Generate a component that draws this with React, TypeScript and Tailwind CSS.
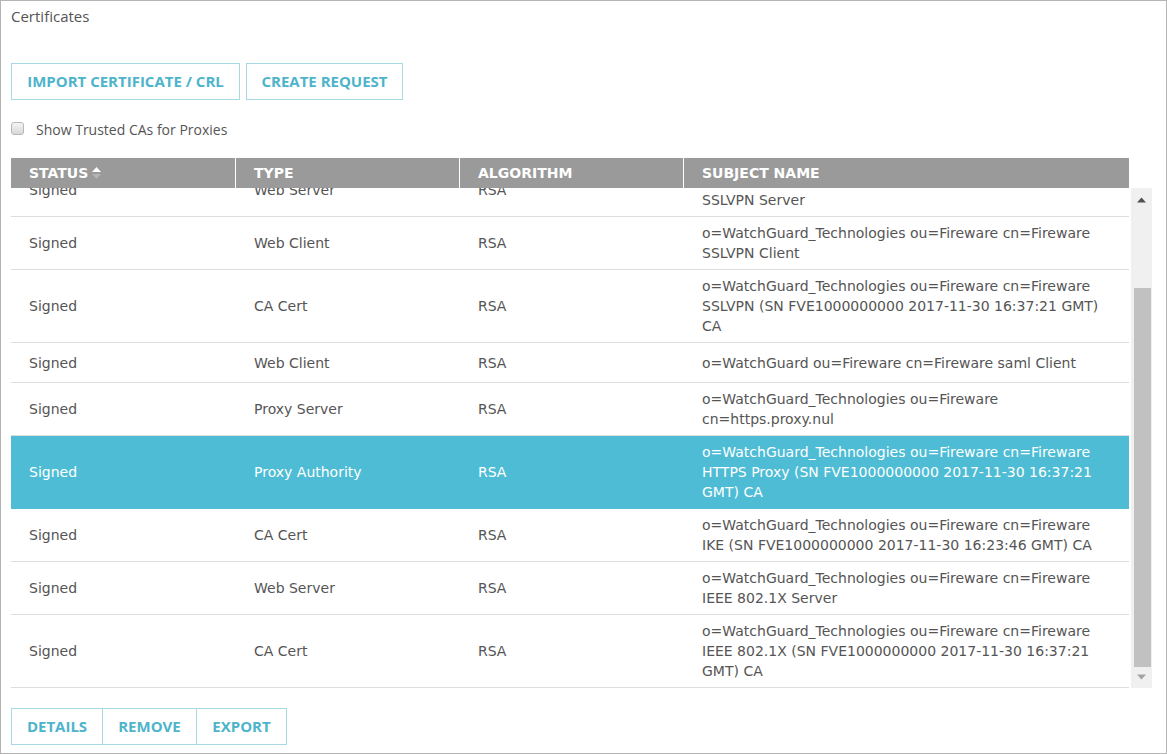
import React from "react";

type Row = { status: string; type: string; alg: string; subject: string[]; selected?: boolean };

const rows: Row[] = [
  { status: "Signed", type: "Web Server", alg: "RSA", subject: ["o=WatchGuard_Technologies ou=Fireware cn=Fireware", "SSLVPN Server"] },
  { status: "Signed", type: "Web Client", alg: "RSA", subject: ["o=WatchGuard_Technologies ou=Fireware cn=Fireware", "SSLVPN Client"] },
  { status: "Signed", type: "CA Cert", alg: "RSA", subject: ["o=WatchGuard_Technologies ou=Fireware cn=Fireware", "SSLVPN (SN FVE1000000000 2017-11-30 16:37:21 GMT)", "CA"] },
  { status: "Signed", type: "Web Client", alg: "RSA", subject: ["o=WatchGuard ou=Fireware cn=Fireware saml Client"] },
  { status: "Signed", type: "Proxy Server", alg: "RSA", subject: ["o=WatchGuard_Technologies ou=Fireware", "cn=https.proxy.nul"] },
  { status: "Signed", type: "Proxy Authority", alg: "RSA", subject: ["o=WatchGuard_Technologies ou=Fireware cn=Fireware", "HTTPS Proxy (SN FVE1000000000 2017-11-30 16:37:21", "GMT) CA"], selected: true },
  { status: "Signed", type: "CA Cert", alg: "RSA", subject: ["o=WatchGuard_Technologies ou=Fireware cn=Fireware", "IKE (SN FVE1000000000 2017-11-30 16:23:46 GMT) CA"] },
  { status: "Signed", type: "Web Server", alg: "RSA", subject: ["o=WatchGuard_Technologies ou=Fireware cn=Fireware", "IEEE 802.1X Server"] },
  { status: "Signed", type: "CA Cert", alg: "RSA", subject: ["o=WatchGuard_Technologies ou=Fireware cn=Fireware", "IEEE 802.1X (SN FVE1000000000 2017-11-30 16:37:21", "GMT) CA"] },
];

const openSans = { fontFamily: '"Open Sans", "Liberation Sans", sans-serif' };

export default function App() {
  return (
    <div
      className="w-[1167px] h-[754px] border border-[#b4b4b4] bg-white box-border overflow-hidden"
      style={{ fontFamily: '"DejaVu Sans", Verdana, sans-serif' }}
    >
      <div className="pl-[10px] pr-[10px]">
        <div className="pt-[5px] h-[62px] text-[15px] leading-[20px] text-[#555]" style={openSans}>
          Certificates
        </div>
        <div className="flex gap-[6px]" style={openSans}>
          <button className="h-[37px] w-[229px] border border-[#a6d9e3] text-[#4db4cb] font-bold text-[15px]">
            IMPORT CERTIFICATE / CRL
          </button>
          <button className="h-[37px] w-[157px] border border-[#a6d9e3] text-[#4db4cb] font-bold text-[15px]">
            CREATE REQUEST
          </button>
        </div>
        <div className="flex items-center mt-[21px] h-[15px]" style={openSans}>
          <div className="w-[13px] h-[13px] rounded-[3px] border border-[#b8b8b8] bg-gradient-to-b from-[#f4f4f4] to-[#d8d8d8]" />
          <span className="ml-[12px] text-[14px] text-[#555] leading-[20px] pt-[2px]">Show Trusted CAs for Proxies</span>
        </div>

        <div className="flex mt-[22px]">
          <div className="w-[1118px]">
            <div className="flex h-[30px] bg-[#9a9a9a] text-white font-bold text-[14px] items-center">
              <div className="w-[224px] pl-[18px] flex items-center gap-[3px]">
                STATUS
                <svg width="11" height="16" viewBox="0 0 11 16">
                  <path d="M1 7 L5.5 2 L10 7 Z" fill="#ffffff" />
                  <path d="M1 9 L5.5 14 L10 9 Z" fill="#b4b4b4" />
                </svg>
              </div>
              <div className="w-[224px] h-full border-l border-white pl-[18px] flex items-center">TYPE</div>
              <div className="w-[224px] h-full border-l border-white pl-[18px] flex items-center">ALGORITHM</div>
              <div className="flex-1 h-full border-l border-white pl-[18px] flex items-center">SUBJECT NAME</div>
            </div>
            <div className="h-[500px] overflow-hidden">
              <div className="-mt-[24px]">
                {rows.map((r, i) => (
                  <div
                    key={i}
                    className={`flex items-center min-h-[40px] py-[6px] border-b box-border text-[14px] leading-[20px] ${
                      r.selected ? "bg-[#4dbcd4] text-white border-[#4dbcd4]" : "text-[#555] border-[#dddddd]"
                    }`}
                  >
                    <div className="w-[224px] pl-[18px]">{r.status}</div>
                    <div className="w-[224px] pl-[19px]">{r.type}</div>
                    <div className="w-[224px] pl-[19px]">{r.alg}</div>
                    <div className="flex-1 pl-[19px] whitespace-nowrap">
                      {r.subject.map((s, j) => (
                        <div key={j}>{s}</div>
                      ))}
                    </div>
                  </div>
                ))}
              </div>
            </div>
          </div>
          <div className="ml-[2px] mt-[30px] w-[21px] h-[500px] bg-[#f0f0f0] flex flex-col items-center">
            <div className="h-[20px] w-full flex items-center justify-center pt-[4px]">
              <svg width="9" height="6" viewBox="0 0 9 6">
                <path d="M0 5.5 L4.5 0.5 L9 5.5 Z" fill="#505050" />
              </svg>
            </div>
            <div className="mt-[80px] w-[17px] h-[379px] bg-[#c1c1c1] ml-[1px]" />
            <div className="h-[20px] w-full flex items-center justify-center">
              <svg width="9" height="6" viewBox="0 0 9 6">
                <path d="M0 0.5 L4.5 5.5 L9 0.5 Z" fill="#a3a3a3" />
              </svg>
            </div>
          </div>
        </div>

        <div className="flex mt-[20px]" style={openSans}>
          <button className="h-[37px] w-[92px] border border-[#a6d9e3] text-[#4db4cb] font-bold text-[15px]">DETAILS</button>
          <button className="h-[37px] w-[94px] border border-l-0 border-[#a6d9e3] text-[#4db4cb] font-bold text-[15px]">REMOVE</button>
          <button className="h-[37px] w-[90px] border border-l-0 border-[#a6d9e3] text-[#4db4cb] font-bold text-[15px]">EXPORT</button>
        </div>
      </div>
    </div>
  );
}
